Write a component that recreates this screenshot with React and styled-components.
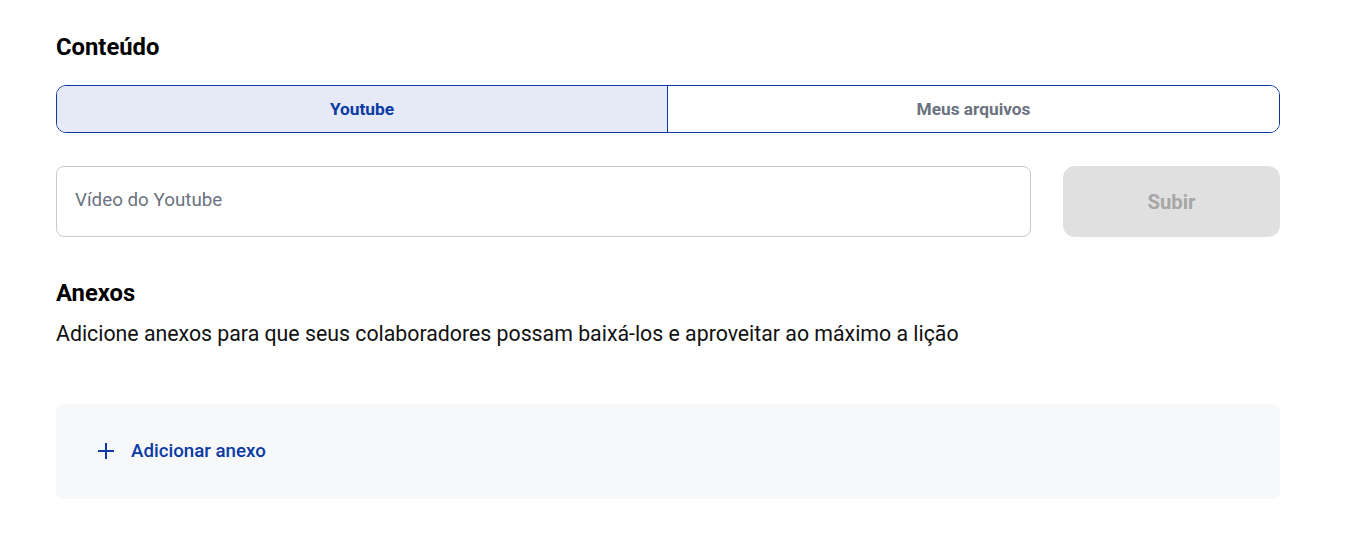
import React from "react";
import styled, { createGlobalStyle } from "styled-components";

const Global = createGlobalStyle`
  html, body { margin: 0; padding: 0; background: #fff; }
  body { font-family: Roboto, "Liberation Sans", Arial, sans-serif; color: #000; }
  * { box-sizing: border-box; }
`;

const Page = styled.div`
  width: 1348px;
  padding: 32px 68px 0 56px;
  display: flex;
  flex-direction: column;
`;

const Title = styled.h2`
  margin: 0;
  font-size: 23.8px;
  line-height: 30px;
  font-weight: 700;
  color: #000;
`;

const Tabs = styled.div`
  margin-top: 23px;
  height: 48px;
  display: grid;
  grid-template-columns: 610px 1fr;
  border: 1px solid #0b3a9e;
  border-radius: 10px;
  overflow: hidden;
`;

const Tab = styled.button`
  border: none;
  border-left: ${(p) => (p.$first ? "none" : "1px solid #0b3a9e")};
  background: ${(p) => (p.$active ? "#e6eaf6" : "#fff")};
  color: ${(p) => (p.$active ? "#0b3aa5" : "#6b7280")};
  font-family: inherit;
  font-size: 17.3px;
  font-weight: 700;
  padding: 0;
  cursor: pointer;
`;

const InputRow = styled.div`
  margin-top: 33px;
  display: flex;
  gap: 32px;
`;

const Input = styled.input`
  flex: 1;
  height: 71px;
  border: 1px solid #c9c9c9;
  border-radius: 8px;
  padding: 0 18px 3px;
  font-family: inherit;
  font-size: 18.8px;
  color: #111;
  outline: none;
  &::placeholder { color: #6b7280; }
`;

const SubmitButton = styled.button`
  width: 217px;
  height: 71px;
  border: none;
  border-radius: 12px;
  background: #e0e0e0;
  color: #a6a6a6;
  font-family: inherit;
  font-size: 20.3px;
  font-weight: 700;
`;

const SectionTitle = styled(Title)`
  margin-top: 41px;
`;

const Description = styled.p`
  margin: 12px 0 0;
  font-size: 21.3px;
  line-height: 28px;
  color: #111;
`;

const AttachBox = styled.div`
  margin-top: 56px;
  height: 95px;
  background: #f7f8fa;
  border-radius: 8px;
  display: flex;
  align-items: center;
  padding: 0 0 2px 40px;
`;

const AddButton = styled.button`
  display: flex;
  align-items: center;
  gap: 15px;
  border: none;
  background: transparent;
  padding: 0;
  color: #0b3aa5;
  font-family: inherit;
  font-size: 18.7px;
  font-weight: 500;
  cursor: pointer;
`;

const PlusIcon = () => (
  <svg width="20" height="20" viewBox="0 0 20 20" fill="none">
    <path d="M10 2v16M2 10h16" stroke="#0b3aa5" strokeWidth="2" />
  </svg>
);

export default function App() {
  return (
    <>
      <Global />
      <Page>
        <Title>Conteúdo</Title>
        <Tabs>
          <Tab $first $active>Youtube</Tab>
          <Tab>Meus arquivos</Tab>
        </Tabs>
        <InputRow>
          <Input placeholder="Vídeo do Youtube" />
          <SubmitButton disabled>Subir</SubmitButton>
        </InputRow>
        <SectionTitle>Anexos</SectionTitle>
        <Description>
          Adicione anexos para que seus colaboradores possam baixá-los e aproveitar ao máximo a lição
        </Description>
        <AttachBox>
          <AddButton>
            <PlusIcon />
            Adicionar anexo
          </AddButton>
        </AttachBox>
      </Page>
    </>
  );
}
